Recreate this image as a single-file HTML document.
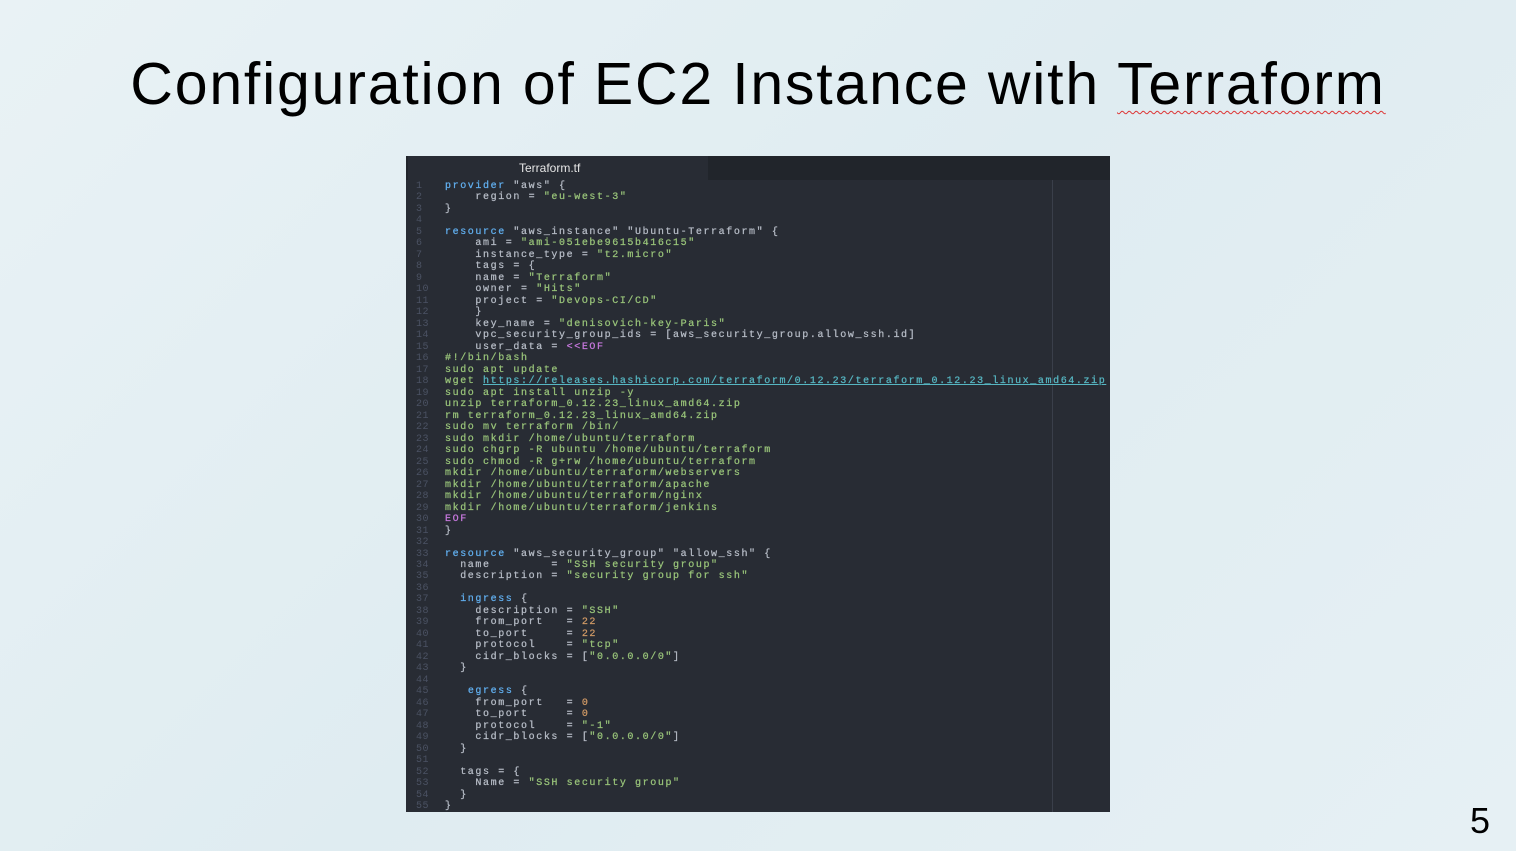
<!DOCTYPE html>
<html><head><meta charset="utf-8"><style>
body{margin:0;width:1516px;height:851px;overflow:hidden;background:linear-gradient(135deg,#e9f2f5 0%,#dfecf1 50%,#e6f0f4 100%);font-family:"Liberation Sans",sans-serif;position:relative}
h1{position:absolute;left:0;width:1516px;top:50px;margin:0;text-align:center;font-weight:normal;font-size:59px;color:#000;letter-spacing:1.8px}
.w{text-decoration:underline wavy #d33;text-decoration-thickness:1px;text-underline-offset:6px}
.num{position:absolute;left:1470px;top:800px;font-size:36px}
.panel{position:absolute;left:406px;top:156px;width:704px;height:656px;background:#282c34;overflow:hidden}
.tabbar{position:absolute;left:0;top:0;width:704px;height:24px;background:#21252b}
.tab{position:absolute;left:2px;top:0;width:300px;height:24px;background:#282c34;color:#e6e6e6;font-size:12px;line-height:24px;text-indent:111px}
.vline{position:absolute;left:646px;top:24px;width:1px;height:632px;background:#3a3f4a}
pre{position:absolute;left:0;top:25px;margin:0;font-family:"Liberation Mono",monospace;font-size:10px;line-height:11.48px;letter-spacing:1.6px;color:#b6bcc6;-webkit-text-stroke:0.25px currentColor}
.ln{display:inline-block;width:39px;color:#4b5263;text-align:left;padding-left:10px;box-sizing:border-box;letter-spacing:0.5px;-webkit-text-stroke:0}
.k{color:#61afef}.s{color:#98c379}.n{color:#d19a66}.p{color:#c678dd}.u{color:#56b6c2;text-decoration:underline}
</style></head><body>
<h1>Configuration of EC2 Instance with <span class="w">Terraform</span></h1>
<div class="panel"><div class="tabbar"><div class="tab">Terraform.tf</div></div><div class="vline"></div>
<pre><span class="ln">1</span><span class="k">provider</span> "aws" {
<span class="ln">2</span>    region = <span class="s">"eu-west-3"</span>
<span class="ln">3</span>}
<span class="ln">4</span>
<span class="ln">5</span><span class="k">resource</span> "aws_instance" "Ubuntu-Terraform" {
<span class="ln">6</span>    ami = <span class="s">"ami-051ebe9615b416c15"</span>
<span class="ln">7</span>    instance_type = <span class="s">"t2.micro"</span>
<span class="ln">8</span>    tags = {
<span class="ln">9</span>    name = <span class="s">"Terraform"</span>
<span class="ln">10</span>    owner = <span class="s">"Hits"</span>
<span class="ln">11</span>    project = <span class="s">"DevOps-CI/CD"</span>
<span class="ln">12</span>    }
<span class="ln">13</span>    key_name = <span class="s">"denisovich-key-Paris"</span>
<span class="ln">14</span>    vpc_security_group_ids = [aws_security_group.allow_ssh.id]
<span class="ln">15</span>    user_data = <span class="p">&lt;&lt;EOF</span>
<span class="ln">16</span><span class="s">#!/bin/bash</span>
<span class="ln">17</span><span class="s">sudo apt update</span>
<span class="ln">18</span><span class="s">wget </span><span class="u">https://releases.hashicorp.com/terraform/0.12.23/terraform_0.12.23_linux_amd64.zip</span>
<span class="ln">19</span><span class="s">sudo apt install unzip -y</span>
<span class="ln">20</span><span class="s">unzip terraform_0.12.23_linux_amd64.zip</span>
<span class="ln">21</span><span class="s">rm terraform_0.12.23_linux_amd64.zip</span>
<span class="ln">22</span><span class="s">sudo mv terraform /bin/</span>
<span class="ln">23</span><span class="s">sudo mkdir /home/ubuntu/terraform</span>
<span class="ln">24</span><span class="s">sudo chgrp -R ubuntu /home/ubuntu/terraform</span>
<span class="ln">25</span><span class="s">sudo chmod -R g+rw /home/ubuntu/terraform</span>
<span class="ln">26</span><span class="s">mkdir /home/ubuntu/terraform/webservers</span>
<span class="ln">27</span><span class="s">mkdir /home/ubuntu/terraform/apache</span>
<span class="ln">28</span><span class="s">mkdir /home/ubuntu/terraform/nginx</span>
<span class="ln">29</span><span class="s">mkdir /home/ubuntu/terraform/jenkins</span>
<span class="ln">30</span><span class="p">EOF</span>
<span class="ln">31</span>}
<span class="ln">32</span>
<span class="ln">33</span><span class="k">resource</span> "aws_security_group" "allow_ssh" {
<span class="ln">34</span>  name        = <span class="s">"SSH security group"</span>
<span class="ln">35</span>  description = <span class="s">"security group for ssh"</span>
<span class="ln">36</span>
<span class="ln">37</span>  <span class="k">ingress</span> {
<span class="ln">38</span>    description = <span class="s">"SSH"</span>
<span class="ln">39</span>    from_port   = <span class="n">22</span>
<span class="ln">40</span>    to_port     = <span class="n">22</span>
<span class="ln">41</span>    protocol    = <span class="s">"tcp"</span>
<span class="ln">42</span>    cidr_blocks = [<span class="s">"0.0.0.0/0"</span>]
<span class="ln">43</span>  }
<span class="ln">44</span>
<span class="ln">45</span>   <span class="k">egress</span> {
<span class="ln">46</span>    from_port   = <span class="n">0</span>
<span class="ln">47</span>    to_port     = <span class="n">0</span>
<span class="ln">48</span>    protocol    = <span class="s">"-1"</span>
<span class="ln">49</span>    cidr_blocks = [<span class="s">"0.0.0.0/0"</span>]
<span class="ln">50</span>  }
<span class="ln">51</span>
<span class="ln">52</span>  tags = {
<span class="ln">53</span>    Name = <span class="s">"SSH security group"</span>
<span class="ln">54</span>  }
<span class="ln">55</span>}</pre></div>
<div class="num">5</div>
</body></html>
